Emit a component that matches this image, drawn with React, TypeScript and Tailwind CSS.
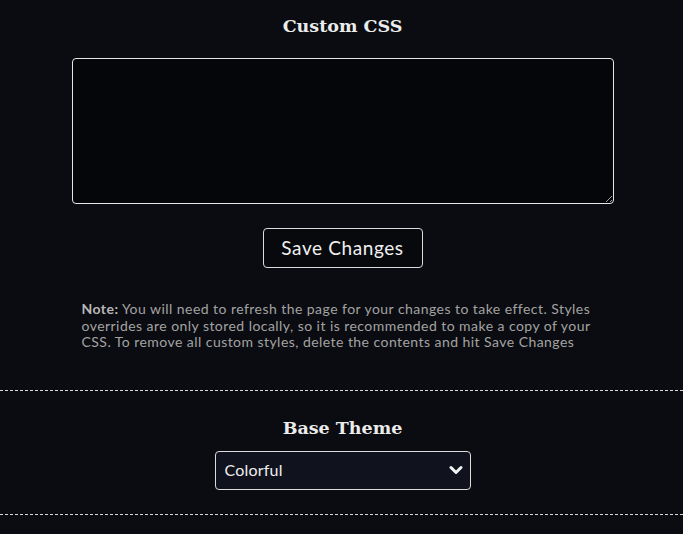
export default function App() {
  return (
    <div
      className="min-h-[534px] bg-[#0b0c11] pl-[2px] text-[#ededed]"
      style={{ fontFamily: 'Lato, "Open Sans", sans-serif' }}
    >
      {/* Custom CSS */}
      <section className="flex flex-col items-center pt-[13px] pb-[39px]">
        <h2
          className="text-[17.5px] font-bold leading-[26px] text-[#ececec]"
          style={{ fontFamily: '"DejaVu Serif", serif' }}
        >
          Custom CSS
        </h2>
        <textarea
          className="mt-[19px] h-[146px] w-[542px] resize-y rounded-[4px] border border-[#e6e6e6] bg-[#05060a] p-2 text-sm text-white outline-none"
          spellCheck={false}
        />
        <button className="mt-[24px] h-[40px] w-[160px] rounded-[4px] border border-[#dcdcdc] bg-[#08090d] text-[19px] tracking-[0.6px] text-[#f0f0f0]">
          Save Changes
        </button>
        <p className="mt-[33px] w-[542px] px-[10px] text-[14px] leading-[16.5px] tracking-[0.45px] text-[#a3a3a3]">
          <b className="font-bold text-[#b8b8b8]">Note:</b> You will need to refresh the page for your changes to take effect. Styles overrides are only stored locally, so it is recommended to make a copy of your CSS. To remove all custom styles, delete the contents and hit Save Changes
        </p>
      </section>

      {/* Base Theme */}
      <section className="-ml-[2px] flex flex-col items-center border-y border-dashed border-[#d8d8d8] pt-[24px] pb-[24px] pl-[2px]">
        <h2
          className="text-[17.5px] font-bold leading-[26px] text-[#ececec]"
          style={{ fontFamily: '"DejaVu Serif", serif' }}
        >
          Base Theme
        </h2>
        <div className="relative mt-[10px] w-[256px]">
          <select
            className="h-[39px] w-full appearance-none rounded-[4px] border border-[#dcdcdc] bg-[#10121d] pl-[9px] text-[16px] tracking-[0.2px] text-[#eeeeee] outline-none"
            defaultValue="Colorful"
          >
            <option>Colorful</option>
            <option>Dark</option>
            <option>Light</option>
          </select>
          <svg
            className="pointer-events-none absolute right-[8px] top-[13px] h-[13px] w-[14px]"
            viewBox="0 0 14 13"
            fill="none"
            stroke="#f2f2f2"
            strokeWidth="3"
            strokeLinecap="round"
            strokeLinejoin="round"
          >
            <path d="M2 3.5l5 5 5-5" />
          </svg>
        </div>
      </section>
    </div>
  );
}
